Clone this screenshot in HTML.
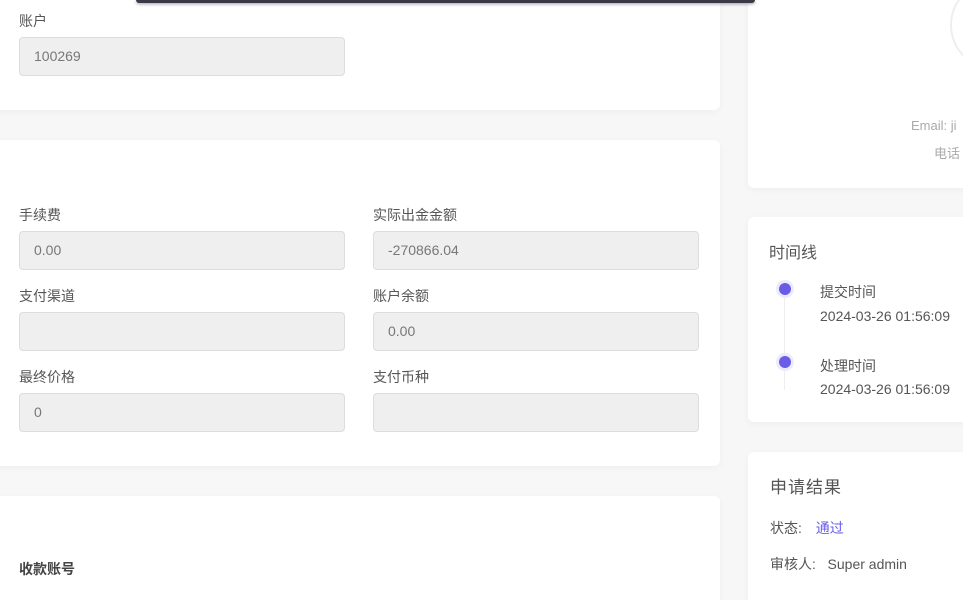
<!DOCTYPE html>
<html><head><meta charset="utf-8"><style>
*{box-sizing:border-box;margin:0;padding:0}
html,body{width:963px;height:600px;overflow:hidden}
body{background:#f7f7f8;font-family:"Liberation Sans","Noto Sans CJK SC",sans-serif;position:relative;color:#555}
.card{position:absolute;background:#fff;border-radius:6px;box-shadow:0 2px 8px rgba(0,0,0,.04)}
.lbl{position:absolute;font-size:14px;color:#555}
.inp{position:absolute;height:39px;width:326px;background:#efefef;border:1px solid #ddd;border-radius:4px;font-size:14px;color:#777;padding:0 14px;line-height:37px}
.t{position:absolute;font-size:14px}
</style></head><body>

<div class="card" style="left:-6px;top:-10px;width:726px;height:120px"></div>
<div class="lbl" style="left:19px;top:11px">账户</div>
<div class="inp" style="left:19px;top:37px">100269</div>

<div class="card" style="left:-6px;top:140px;width:726px;height:326px"></div>
<div class="lbl" style="left:19px;top:205px">手续费</div>
<div class="inp" style="left:19px;top:231px">0.00</div>
<div class="lbl" style="left:373px;top:205px">实际出金金额</div>
<div class="inp" style="left:373px;top:231px">-270866.04</div>
<div class="lbl" style="left:19px;top:286px">支付渠道</div>
<div class="inp" style="left:19px;top:312px"></div>
<div class="lbl" style="left:373px;top:286px">账户余额</div>
<div class="inp" style="left:373px;top:312px">0.00</div>
<div class="lbl" style="left:19px;top:367px">最终价格</div>
<div class="inp" style="left:19px;top:393px">0</div>
<div class="lbl" style="left:373px;top:367px">支付币种</div>
<div class="inp" style="left:373px;top:393px"></div>

<div class="card" style="left:-6px;top:496px;width:726px;height:120px"></div>
<div class="t" style="left:19px;top:559px;font-weight:bold;color:#444">收款账号</div>

<div class="card" style="left:748px;top:-10px;width:230px;height:198px"></div>
<div style="position:absolute;left:950px;top:-20px;width:90px;height:90px;border-radius:50%;border:2px solid #eee"></div>
<div class="t" style="left:911px;top:118px;font-size:13px;color:#aaa">Email: ji</div>
<div class="t" style="left:934px;top:143px;font-size:13px;color:#aaa">电话</div>

<div class="card" style="left:748px;top:217px;width:230px;height:205px"></div>
<div class="t" style="left:769px;top:239px;font-size:16px;color:#555">时间线</div>
<div style="position:absolute;left:784px;top:290px;width:1px;height:100px;background:#eee"></div>
<div style="position:absolute;left:779px;top:283px;width:12px;height:12px;border-radius:50%;background:#6b5ce7;box-shadow:0 0 0 3px #ecebfc"></div>
<div style="position:absolute;left:779px;top:356px;width:12px;height:12px;border-radius:50%;background:#6b5ce7;box-shadow:0 0 0 3px #ecebfc"></div>
<div class="t" style="left:820px;top:282px">提交时间</div>
<div class="t" style="left:820px;top:308px">2024-03-26 01:56:09</div>
<div class="t" style="left:820px;top:356px">处理时间</div>
<div class="t" style="left:820px;top:381px">2024-03-26 01:56:09</div>

<div class="card" style="left:748px;top:452px;width:230px;height:160px"></div>
<div class="t" style="left:770px;top:473px;font-size:17px;letter-spacing:1px">申请结果</div>
<div class="t" style="left:770px;top:518px">状态: <span style="color:#6b5ce7;margin-left:10px">通过</span></div>
<div class="t" style="left:770px;top:554px">审核人: &nbsp;&nbsp;Super admin</div>

<div style="position:absolute;left:136px;top:0;width:619px;height:3px;background:#3a3a46;border-radius:0 0 3px 3px;box-shadow:0 1px 3px rgba(0,0,0,.4);z-index:10"></div>
</body></html>
